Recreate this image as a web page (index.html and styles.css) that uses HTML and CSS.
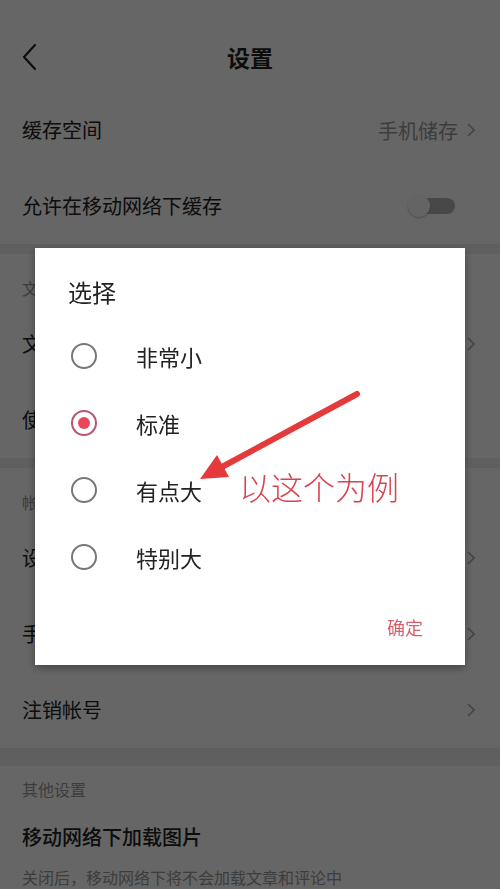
FILE: index.html
```html
<!DOCTYPE html>
<html lang="zh-CN">
<head>
<meta charset="utf-8">
<title>设置</title>
<link rel="stylesheet" href="styles.css">
</head>
<body>
<div class="page">
  <header class="toolbar">
    <svg class="back" width="16" height="28" viewBox="0 0 16 28"><path d="M14 2 L3 14 L14 26" fill="none" stroke="#222" stroke-width="2.2" stroke-linecap="round" stroke-linejoin="round"/></svg>
    <h1 class="title">设置</h1>
  </header>

  <div class="row">
    <span class="label">缓存空间</span>
    <span class="value">手机储存<svg class="chev" width="8" height="14" viewBox="0 0 8 14"><path d="M1 1 L7 7 L1 13" fill="none" stroke="#aaa" stroke-width="1.6"/></svg></span>
  </div>
  <div class="row">
    <span class="label">允许在移动网络下缓存</span>
    <span class="toggle"><span class="knob"></span></span>
  </div>

  <div class="band"></div>
  <div class="sec-head">文章阅读</div>
  <div class="row">
    <span class="label">文字大小</span>
    <svg class="chev" width="8" height="14" viewBox="0 0 8 14"><path d="M1 1 L7 7 L1 13" fill="none" stroke="#aaa" stroke-width="1.6"/></svg>
  </div>
  <div class="row">
    <span class="label">使用音量键翻页</span>
    <span class="toggle"><span class="knob"></span></span>
  </div>

  <div class="band"></div>
  <div class="sec-head">帐号设置</div>
  <div class="row">
    <span class="label">设置密码</span>
    <svg class="chev" width="8" height="14" viewBox="0 0 8 14"><path d="M1 1 L7 7 L1 13" fill="none" stroke="#aaa" stroke-width="1.6"/></svg>
  </div>
  <div class="row">
    <span class="label">手机号绑定</span>
    <svg class="chev" width="8" height="14" viewBox="0 0 8 14"><path d="M1 1 L7 7 L1 13" fill="none" stroke="#aaa" stroke-width="1.6"/></svg>
  </div>
  <div class="row">
    <span class="label">注销帐号</span>
    <svg class="chev" width="8" height="14" viewBox="0 0 8 14"><path d="M1 1 L7 7 L1 13" fill="none" stroke="#aaa" stroke-width="1.6"/></svg>
  </div>

  <div class="band band-tall"></div>
  <div class="sec-head sec-head-tight">其他设置</div>
  <div class="row row-sub">
    <span class="label label-strong">移动网络下加载图片</span>
    <span class="sub">关闭后，移动网络下将不会加载文章和评论中的图片</span>
  </div>
</div>

<div class="overlay"></div>

<div class="dialog">
  <h2 class="dialog-title">选择</h2>
  <ul class="options">
    <li class="option"><span class="radio"></span><span class="opt-text">非常小</span></li>
    <li class="option"><span class="radio radio-on"></span><span class="opt-text">标准</span></li>
    <li class="option"><span class="radio"></span><span class="opt-text">有点大</span></li>
    <li class="option"><span class="radio"></span><span class="opt-text">特别大</span></li>
  </ul>
  <div class="dialog-foot"><span class="ok">确定</span></div>
</div>

<svg class="annot-arrow" width="500" height="889" viewBox="0 0 500 889">
  <line x1="357" y1="394" x2="220" y2="468" stroke="#e53a3c" stroke-width="6" stroke-linecap="round"/>
  <polygon points="200,479 217,455 229,477" fill="#e53a3c"/>
</svg>
<span class="annot-text">以这个为例</span>
</body>
</html>
```

FILE: styles.css
```css
html, body {
  margin: 0;
  padding: 0;
}
body {
  width: 500px;
  height: 889px;
  overflow: hidden;
  background: #fff;
  font-family: "Noto Sans CJK SC", "Noto Sans", sans-serif;
  color: #222;
}
.page {
  display: flex;
  flex-direction: column;
}
.toolbar {
  height: 92px;
  display: flex;
  align-items: center;
  justify-content: center;
  position: relative;
  padding-top: 22px;
  box-sizing: border-box;
}
.back {
  position: absolute;
  left: 21px;
  top: 43px;
}
.title {
  margin: 0;
  font-size: 23px;
  font-weight: 700;
  line-height: 32px;
}
.row {
  height: 76px;
  display: flex;
  align-items: center;
  justify-content: space-between;
  padding: 0 25px 0 22px;
  box-sizing: border-box;
}
.label {
  font-size: 20px;
  line-height: 28px;
  color: #222;
}
.value {
  display: flex;
  align-items: center;
  gap: 9px;
  font-size: 20px;
  color: #999;
}
.chev {
  display: block;
}
.toggle {
  width: 47px;
  height: 22px;
  position: relative;
  display: flex;
  align-items: center;
  margin-right: 20px;
}
.toggle::before {
  content: "";
  display: block;
  margin-left: 10px;
  width: 37px;
  height: 16px;
  border-radius: 8px;
  background: #b4b4b4;
}
.knob {
  position: absolute;
  left: 0;
  top: 0;
  width: 22px;
  height: 22px;
  border-radius: 50%;
  background: #fafafa;
  box-shadow: 0 1px 2px rgba(0,0,0,0.25);
}
.band {
  height: 10px;
  background: #eeeeee;
}
.band-tall {
  height: 18px;
}
.sec-head {
  height: 52px;
  padding: 24px 22px 0;
  box-sizing: border-box;
  font-size: 16px;
  line-height: 20px;
  color: #999;
}
.sec-head-tight {
  height: 44px;
  padding-top: 13px;
}
.row-sub {
  flex-direction: column;
  align-items: flex-start;
  justify-content: flex-start;
  padding-top: 13px;
  height: 100px;
  gap: 14px;
}
.label-strong {
  font-weight: 500;
}
.sub {
  max-width: 330px;
  font-size: 16px;
  line-height: 24px;
  color: #999;
}

.overlay {
  position: fixed;
  inset: 0;
  background: rgba(0,0,0,0.6);
}

.dialog {
  position: fixed;
  left: 35px;
  top: 248px;
  width: 430px;
  height: 417px;
  background: #fff;
  box-shadow: 0 3px 8px rgba(0,0,0,0.35);
  display: flex;
  flex-direction: column;
  box-sizing: border-box;
  padding-top: 28px;
}
.dialog-title {
  margin: 0;
  padding-left: 33px;
  font-size: 24px;
  font-weight: 400;
  line-height: 32px;
  color: #222;
}
.options {
  list-style: none;
  margin: 14px 0 0;
  padding: 0;
}
.option {
  height: 67px;
  display: flex;
  align-items: center;
  padding-left: 36px;
  gap: 39px;
}
.radio {
  width: 26px;
  height: 26px;
  box-sizing: border-box;
  border: 2.5px solid #777;
  border-radius: 50%;
  display: flex;
  align-items: center;
  justify-content: center;
  flex: none;
}
.radio-on {
  border-color: #b8566e;
}
.radio-on::after {
  content: "";
  width: 12px;
  height: 12px;
  border-radius: 50%;
  background: #e8475b;
}
.opt-text {
  font-size: 22px;
  line-height: 30px;
  color: #222;
}
.dialog-foot {
  flex: 1;
  display: flex;
  justify-content: flex-end;
  align-items: flex-start;
  padding: 24px 42px 0 0;
}
.ok {
  font-size: 18px;
  line-height: 26px;
  color: #d4606f;
}

.annot-arrow {
  position: fixed;
  left: 0;
  top: 0;
  pointer-events: none;
}
.annot-text {
  position: fixed;
  left: 239px;
  top: 466px;
  font-size: 32px;
  line-height: 40px;
  color: #d9434f;
  font-weight: 300;
  white-space: nowrap;
}
```
